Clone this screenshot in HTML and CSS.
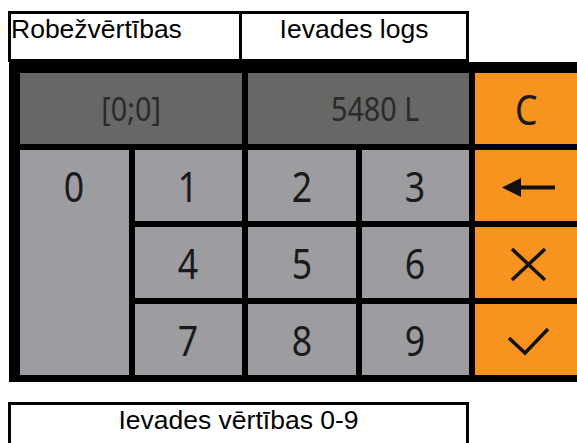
FILE: index.html
```html
<!DOCTYPE html>
<html lang="lv">
<head>
<meta charset="utf-8">
<title>Ievades logs</title>
<link rel="stylesheet" href="styles.css">
</head>
<body>
<div class="labels">
  <div class="label label-left">Robežvērtības</div>
  <div class="label label-mid">Ievades logs</div>
</div>
<div class="panel">
  <div class="cell display range"><span class="t">[0;0]</span></div>
  <div class="cell display value"><span class="t">5480 L</span></div>
  <div class="cell action"><span class="t big">C</span></div>

  <div class="cell key zero"><span class="t">0</span></div>
  <div class="cell key"><span class="t">1</span></div>
  <div class="cell key"><span class="t">2</span></div>
  <div class="cell key"><span class="t">3</span></div>
  <div class="cell action">
    <svg class="icon" viewBox="0 0 102 71" preserveAspectRatio="none">
      <path d="M27 37.5 L46 28 L46 47 Z" fill="#111"/>
      <rect x="44" y="35.5" width="36" height="4" fill="#111"/>
    </svg>
  </div>

  <div class="cell key"><span class="t">4</span></div>
  <div class="cell key"><span class="t">5</span></div>
  <div class="cell key"><span class="t">6</span></div>
  <div class="cell action">
    <svg class="icon" viewBox="0 0 102 71" preserveAspectRatio="none">
      <path d="M37 22 L70 53 M70 22 L37 53" stroke="#111" stroke-width="3.5" fill="none"/>
    </svg>
  </div>

  <div class="cell key"><span class="t">7</span></div>
  <div class="cell key"><span class="t">8</span></div>
  <div class="cell key"><span class="t">9</span></div>
  <div class="cell action">
    <svg class="icon" viewBox="0 0 102 71" preserveAspectRatio="none">
      <path d="M34 34 L50 49 L73 25" stroke="#111" stroke-width="3.5" fill="none"/>
    </svg>
  </div>
</div>
<div class="note">Ievades vērtības 0-9</div>
</body>
</html>
```
FILE: styles.css
```css
html, body {
  margin: 0;
  padding: 0;
  background: #fff;
  overflow: hidden;
  height: 443px;
}

body {
  font-family: "Liberation Sans", Arial, sans-serif;
  color: #000;
}

.labels {
  display: flex;
  margin: 11px 0 0 8px;
}

.label {
  box-sizing: border-box;
  height: 51px;
  border: 3px solid #000;
  font-size: 26.5px;
  line-height: 30px;
  white-space: nowrap;
}

.label-left {
  width: 234px;
  padding-left: 0;
}

.label-mid {
  width: 227px;
  border-left: none;
  text-align: center;
}

.panel {
  margin-left: 9px;
  background: #000;
  padding: 11px 0 7px 11px;
  display: grid;
  grid-template-columns: 109px 107px 108px 107px 1fr;
  grid-template-rows: repeat(4, 71px);
  gap: 6px;
}

.cell {
  text-align: center;
  line-height: 71px;
  font-family: "Noto Sans", "DejaVu Sans", sans-serif;
  color: #1a1a1a;
  font-size: 42px;
  overflow: hidden;
}

.t {
  display: inline-block;
  transform: scaleX(0.85);
}

.display {
  background: #676866;
  font-size: 32px;
  color: #2a2a2a;
}

.display .t {
  transform: scaleX(0.9);
}

.range {
  grid-column: 1 / 3;
}

.value {
  grid-column: 3 / 5;
  text-align: right;
  padding-right: 45px;
}

.key {
  background: #9d9ca0;
}

.zero {
  grid-row: 2 / 5;
}

.action {
  background: #f8931f;
}

.big {
  line-height: 68px;
}

.icon {
  display: block;
  width: 100%;
  height: 100%;
}

.note {
  box-sizing: border-box;
  margin: 20px 0 0 8px;
  width: 461px;
  height: 51px;
  border: 3px solid #000;
  font-size: 26.5px;
  line-height: 30px;
  text-align: center;
  white-space: nowrap;
}
```
